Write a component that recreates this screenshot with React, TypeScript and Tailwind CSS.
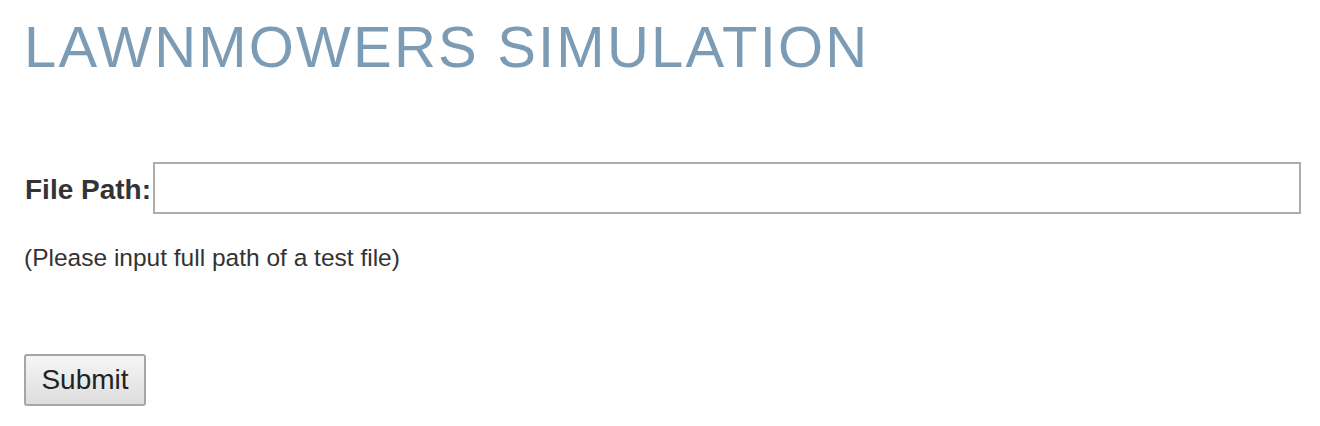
export default function App() {
  return (
    <div className="min-h-[426px] w-full bg-white pr-[19px] pl-[24px] font-['Liberation_Sans',Arial,sans-serif]">
      <h1 className="pt-[18px] text-[58px] leading-[58px] font-normal tracking-[2.2px] text-[#7c9cb6]">
        LAWNMOWERS SIMULATION
      </h1>

      <form className="mt-[86px]" onSubmit={(e) => e.preventDefault()}>
        <div className="flex items-center">
          <label
            htmlFor="path"
            className="shrink-0 pt-[3px] pl-px text-[28px] leading-[28px] font-bold whitespace-nowrap text-[#333]"
          >
            File Path:
          </label>
          <input
            id="path"
            type="text"
            className="ml-[2px] h-[52px] min-w-0 flex-1 border-2 border-[#adadad] bg-white px-2 text-[24px] outline-none"
          />
        </div>

        <p className="mt-[31px] text-[24.5px] leading-[25px] text-[#333]">
          (Please input full path of a test file)
        </p>

        <button
          type="submit"
          className="mt-[84px] h-[52px] w-[122px] rounded-[3px] border-2 border-[#a6a6a6] bg-gradient-to-b from-[#f6f6f6] to-[#dddddd] text-[28px] text-[#222]"
        >
          Submit
        </button>
      </form>
    </div>
  )
}
